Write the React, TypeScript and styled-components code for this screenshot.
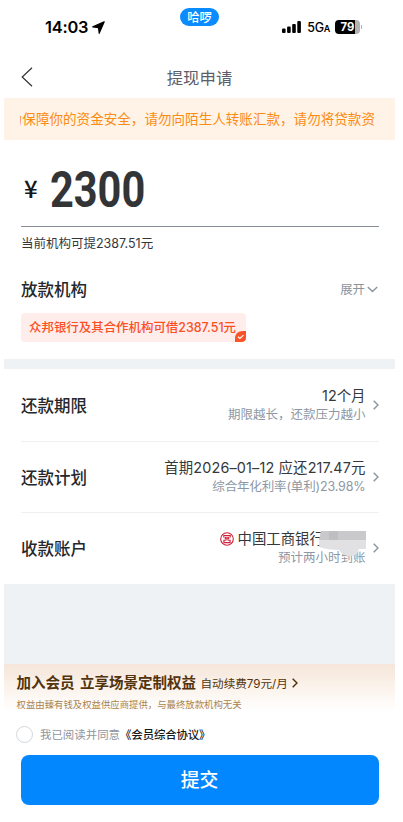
import React from 'react';
import styled, { createGlobalStyle } from 'styled-components';

const GlobalStyle = createGlobalStyle`
  *, *::before, *::after { box-sizing: border-box; }
  html, body { margin: 0; padding: 0; background: #fff; }
  body {
    font-family: Inter, "Noto Sans CJK SC", sans-serif;
    color: #2b2d31;
    overflow: hidden;
  }
  svg { display: block; flex: none; }
`;

const Screen = styled.main`
  width: 391px;
  height: 822px;
  margin-left: 4px;
  display: flex;
  flex-direction: column;
  background: #fff;
  white-space: nowrap;
`;

const StatusBar = styled.header`
  height: 54px;
  display: grid;
  grid-template-columns: 1fr 39px 1fr;
  align-items: start;
`;

const Clock = styled.div`
  display: flex;
  align-items: center;
  gap: 4px;
  height: 24px;
  margin-top: 15px;
  padding-left: 41px;
  color: #000;
  font-size: 16.4px;
  font-weight: 600;
  letter-spacing: -0.2px;
`;

const IslandPill = styled.div`
  height: 18px;
  margin-top: 8px;
  border-radius: 9px;
  background: #0a8bff;
  color: #fff;
  font-size: 12.3px;
  font-weight: 500;
  line-height: 19px;
  text-align: center;
`;

const Signals = styled.div`
  display: flex;
  align-items: center;
  justify-content: flex-end;
  height: 24px;
  margin-top: 15px;
  padding-right: 33px;
`;

const Network = styled.span`
  margin: 1px 5px 0 6px;
  font-size: 12.5px;
  font-weight: 500;
  letter-spacing: -0.3px;
  color: #000;
  small { font-size: 9px; font-weight: 600; }
`;

const Battery = styled.div`
  width: 25px;
  height: 14px;
  border-radius: 4px;
  background: linear-gradient(90deg, #000 79%, #b3b3b3 79%);
  color: #fff;
  font-size: 11.3px;
  font-weight: 700;
  line-height: 14.5px;
  text-align: center;
`;

const BatteryCap = styled.i`
  width: 1px;
  height: 4px;
  margin-left: 1px;
  background: #b3b3b3;
`;

const NavBar = styled.nav`
  height: 44px;
  display: grid;
  grid-template-columns: 40px 1fr 40px;
  align-items: center;
  padding: 2px 0 0 0;
`;

const BackButton = styled.button`
  display: flex;
  padding: 0 0 0 17px;
  border: 0;
  background: none;
`;

const PageTitle = styled.h1`
  margin: 0;
  padding-top: 1px;
  font-size: 16.4px;
  font-weight: 400;
  line-height: 24px;
  text-align: center;
  color: #5c5e6b;
`;

const Notice = styled.div`
  height: 42px;
  padding: 0 20px 0 16px;
  background: #fff3e7;
`;

const NoticeViewport = styled.div`
  display: flex;
  justify-content: flex-end;
  overflow: hidden;
  font-size: 13.57px;
  line-height: 42px;
  color: #fb8c12;
`;

const AmountSection = styled.section`
  height: 219px;
  padding: 0 16px 0 17px;
`;

const AmountField = styled.div`
  display: flex;
  height: 87px;
  padding: 24px 0 0 3px;
  border-bottom: 1px solid #888e98;
`;

const Currency = styled.span`
  width: 26px;
  padding-top: 9px;
  font-size: 24px;
  font-family: "Noto Sans CJK SC", sans-serif;
  font-weight: 500;
  line-height: 30px;
  color: #17181a;
`;

const Amount = styled.span`
  font-family: Roboto, sans-serif;
  font-size: 50px;
  font-weight: 700;
  line-height: 52px;
  color: #333436;
  transform: scaleX(0.83);
  transform-origin: left;
`;

const Limit = styled.p`
  margin: 8px 0 0;
  font-size: 12.5px;
  line-height: 18px;
  color: #35373b;
`;

const LenderHeader = styled.div`
  display: flex;
  align-items: center;
  justify-content: space-between;
  height: 24px;
  margin-top: 24px;
  padding-right: 1px;
`;

const Heading = styled.h2`
  margin: 0;
  padding-top: 2px;
  font-size: 16.5px;
  font-weight: 500;
  line-height: 24px;
  color: #25272b;
`;

const ExpandButton = styled.button`
  display: flex;
  align-items: center;
  gap: 2px;
  padding: 0;
  border: 0;
  background: none;
  font: inherit;
  font-size: 12.4px;
  color: #8c949e;
`;

const LenderTag = styled.div`
  position: relative;
  width: 225px;
  height: 29px;
  margin-top: 12px;
  padding-left: 8px;
  border-radius: 4px;
  overflow: hidden;
  background: #ffedeb;
  color: #fb5024;
  font-size: 12.45px;
  font-weight: 500;
  line-height: 29px;
`;

const TagCheck = styled.span`
  position: absolute;
  right: 0;
  bottom: 0;
`;

const Gap = styled.div<{ $height: number }>`
  flex: none;
  height: ${(p) => p.$height}px;
  background: #eef2f5;
`;

const Details = styled.section`
  padding: 0 16px 0 17px;
`;

const DetailRow = styled.div`
  display: flex;
  align-items: center;
  height: 71.5px;
  & + & { border-top: 1px solid #eff0f2; }
`;

const DetailBody = styled.div`
  display: flex;
  flex-direction: column;
  align-items: flex-end;
  margin: 0 7.5px 0 auto;
`;

const DetailValue = styled.div`
  display: flex;
  align-items: center;
  position: relative;
  font-size: 14.4px;
  line-height: 20px;
  color: #35373b;
`;

const DetailHint = styled.div`
  font-size: 12.5px;
  line-height: 18px;
  color: #8d97a4;
`;

const Spaced = styled.span<{ $tracking: number }>`
  letter-spacing: ${(p) => p.$tracking}px;
  margin-right: ${(p) => -p.$tracking}px;
`;

const BankName = styled.span`
  width: 128px;
  margin-left: 4px;
`;

const Redaction = styled.span`
  position: absolute;
  right: 0;
  top: 2px;
`;

const Member = styled.section`
  height: 56px;
  padding: 7px 12px 0;
  background: linear-gradient(#f5e6d9 0, #faf1e9 20px, #fff 47px);
`;

const MemberLine = styled.div`
  display: flex;
  align-items: center;
  height: 24px;
  color: #53330c;
`;

const MemberTitle = styled.strong`
  padding-left: 0.5px;
  font-size: 14.5px;
  font-weight: 700;
  line-height: 24px;
  word-spacing: 2px;
`;

const MemberPrice = styled.span`
  margin: 0 4px 0 4.5px;
  font-size: 11.6px;
`;

const MemberNote = styled.p`
  margin: 2px 0 0 0.5px;
  font-size: 9.38px;
  line-height: 16px;
  color: #a9824f;
`;

const Agreement = styled.label`
  display: flex;
  align-items: center;
  height: 28px;
  padding-left: 12px;
  font-size: 11.45px;
  color: #8f959e;
  b { font-weight: 500; color: #17181a; letter-spacing: -0.15px; }
`;

const Radio = styled.i`
  width: 17px;
  height: 17px;
  margin-right: 7px;
  border: 1px solid #d3d8dc;
  border-radius: 50%;
`;

const SubmitButton = styled.button`
  height: 50px;
  margin: 7px 16.5px 0 16.5px;
  padding: 2px 0 0;
  border: 0;
  border-radius: 8px;
  background: #0387ff;
  color: #fff;
  font: inherit;
  font-size: 18.8px;
  font-weight: 500;
  line-height: 48px;
`;

const Chevron = ({ color = '#8d97a4' }: { color?: string }) => (
  <svg width="6" height="10" viewBox="0 0 6 10" fill="none" stroke={color} strokeWidth="1.5">
    <path d="M.7.7 5 5 .7 9.3" />
  </svg>
);

const BankLogo = () => (
  <svg width="14" height="14" viewBox="0 0 14 14" fill="none" stroke="#cf2039">
    <circle cx="7" cy="7" r="6.3" strokeWidth="1.1" />
    <path strokeWidth="1.1" d="M3.8 5.4V3.5h6.4v1.9M5.3 5.2h3.4v1.6H5.3zM7 6.8v1.6M5.9 8.3H3.9v2.3h6.2V8.3H8.1" />
  </svg>
);

interface Detail {
  label: string;
  value: React.ReactNode;
  hint: React.ReactNode;
}

const details: Detail[] = [
  { label: '还款期限', value: '12个月', hint: '期限越长，还款压力越小' },
  {
    label: '还款计划',
    value: <Spaced $tracking={0.15}>首期2026–01–12 应还217.47元</Spaced>,
    hint: <Spaced $tracking={-0.15}>综合年化利率(单利)23.98%</Spaced>,
  },
  {
    label: '收款账户',
    value: (
      <>
        <BankLogo />
        <BankName>中国工商银行</BankName>
        <Redaction>
          <svg width="47" height="26" viewBox="0 0 47 26">
            <path fill="#e1e1e3" d="M2 0h45v18h-7q-1 7-9 7-7 0-11-6-11 0-20-3l1-8z" />
            <path fill="#c9c9cc" d="M2 0h45v9H0z" />
            <path fill="#bfbfc2" d="M10 0h9v9h-9z" />
          </svg>
        </Redaction>
      </>
    ),
    hint: '预计两小时到账',
  },
];

export default function App() {
  return (
    <>
      <GlobalStyle />
      <Screen>
        <StatusBar>
          <Clock>
            14:03
            <svg width="13" height="13" viewBox="0 0 13 13" fill="#000" stroke="#000" strokeWidth="1.2" strokeLinejoin="round">
              <path d="M12.2.8.8 5.9l5.7.7.7 5.7z" />
            </svg>
          </Clock>
          <IslandPill>哈啰</IslandPill>
          <Signals>
            <svg width="19" height="12" viewBox="0 0 19 12" fill="#000">
              <rect y="7.5" width="3.6" height="4.5" rx="1" />
              <rect x="5.1" y="5.5" width="3.6" height="6.5" rx="1" />
              <rect x="10.2" y="3" width="3.6" height="9" rx="1" />
              <rect x="15.3" width="3.6" height="12" rx="1" />
            </svg>
            <Network>5G<small>A</small></Network>
            <Battery>79</Battery>
            <BatteryCap />
          </Signals>
        </StatusBar>
        <NavBar>
          <BackButton aria-label="返回">
            <svg width="12" height="20" viewBox="0 0 12 20" fill="none" stroke="#303236" strokeWidth="1.2">
              <path d="M11 .8 1.2 10 11 19.2" />
            </svg>
          </BackButton>
          <PageTitle>提现申请</PageTitle>
        </NavBar>
        <Notice>
          <NoticeViewport>
            <span>为保障你的资金安全，请勿向陌生人转账汇款，请勿将贷款资</span>
          </NoticeViewport>
        </Notice>
        <AmountSection>
          <AmountField>
            <Currency>¥</Currency>
            <Amount>2300</Amount>
          </AmountField>
          <Limit>当前机构可提2387.51元</Limit>
          <LenderHeader>
            <Heading>放款机构</Heading>
            <ExpandButton>
              展开
              <svg width="11" height="7" viewBox="0 0 11 7" fill="none" stroke="#8c949e" strokeWidth="1.4">
                <path d="M.8.9 5.5 5.6 10.2.9" />
              </svg>
            </ExpandButton>
          </LenderHeader>
          <LenderTag>
            众邦银行及其合作机构可借2387.51元
            <TagCheck>
              <svg width="11" height="11" viewBox="0 0 11 11">
                <path d="M11 0v7q0 4-4 4H0V8q0-8 8-8z" fill="#fb5428" />
                <path d="m3 5.8 1.8 1.7 3.7-3.4" fill="none" stroke="#fff" strokeWidth="1.2" />
              </svg>
            </TagCheck>
          </LenderTag>
        </AmountSection>
        <Gap $height={10} />
        <Details>
          {details.map((item) => (
            <DetailRow key={item.label}>
              <Heading>{item.label}</Heading>
              <DetailBody>
                <DetailValue>{item.value}</DetailValue>
                <DetailHint>{item.hint}</DetailHint>
              </DetailBody>
              <Chevron />
            </DetailRow>
          ))}
        </Details>
        <Gap $height={80.5} />
        <Member>
          <MemberLine>
            <MemberTitle>加入会员 立享场景定制权益</MemberTitle>
            <MemberPrice>自动续费79元/月</MemberPrice>
            <Chevron color="#53330c" />
          </MemberLine>
          <MemberNote>权益由臻有钱及权益供应商提供，与最终放款机构无关</MemberNote>
        </Member>
        <Agreement>
          <Radio />
          我已阅读并同意<b>《会员综合协议》</b>
        </Agreement>
        <SubmitButton>提交</SubmitButton>
      </Screen>
    </>
  );
}
